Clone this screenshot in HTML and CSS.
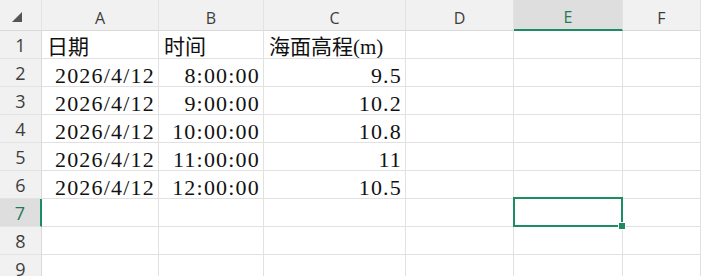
FILE: index.html
```html
<!DOCTYPE html>
<html lang="zh-CN">
<head>
  <meta charset="UTF-8" />
  <title>海面高程</title>
  <link rel="stylesheet" href="styles.css">
</head>
<body>

<div class="sheet">
  <!-- column headers -->
  <div class="corner">
    <svg width="10" height="10" viewBox="0 0 10 10"><polygon points="10,0 10,10 0,10" fill="#555"/></svg>
  </div>
  <div class="col-head">A</div>
  <div class="col-head">B</div>
  <div class="col-head">C</div>
  <div class="col-head">D</div>
  <div class="col-head active">E</div>
  <div class="col-head">F</div>

  <div class="row-head">1</div>
  <div class="cell text">日期</div>
  <div class="cell text">时间</div>
  <div class="cell text">海面高程(m)</div>
  <div class="cell"></div>
  <div class="cell"></div>
  <div class="cell"></div>

  <div class="row-head">2</div>
  <div class="cell num">2026/4/12</div>
  <div class="cell num">8:00:00</div>
  <div class="cell num">9.5</div>
  <div class="cell"></div>
  <div class="cell"></div>
  <div class="cell"></div>

  <div class="row-head">3</div>
  <div class="cell num">2026/4/12</div>
  <div class="cell num">9:00:00</div>
  <div class="cell num">10.2</div>
  <div class="cell"></div>
  <div class="cell"></div>
  <div class="cell"></div>

  <div class="row-head">4</div>
  <div class="cell num">2026/4/12</div>
  <div class="cell num">10:00:00</div>
  <div class="cell num">10.8</div>
  <div class="cell"></div>
  <div class="cell"></div>
  <div class="cell"></div>

  <div class="row-head">5</div>
  <div class="cell num">2026/4/12</div>
  <div class="cell num">11:00:00</div>
  <div class="cell num">11</div>
  <div class="cell"></div>
  <div class="cell"></div>
  <div class="cell"></div>

  <div class="row-head">6</div>
  <div class="cell num">2026/4/12</div>
  <div class="cell num">12:00:00</div>
  <div class="cell num">10.5</div>
  <div class="cell"></div>
  <div class="cell"></div>
  <div class="cell"></div>

  <div class="row-head active">7</div>
  <div class="cell"></div>
  <div class="cell"></div>
  <div class="cell"></div>
  <div class="cell"></div>
  <div class="cell selected"><span class="sel-box"><span class="sel-handle"></span></span></div>
  <div class="cell"></div>

  <div class="row-head">8</div>
  <div class="cell"></div>
  <div class="cell"></div>
  <div class="cell"></div>
  <div class="cell"></div>
  <div class="cell"></div>
  <div class="cell"></div>

  <div class="row-head">9</div>
  <div class="cell"></div>
  <div class="cell"></div>
  <div class="cell"></div>
  <div class="cell"></div>
  <div class="cell"></div>
  <div class="cell"></div>
</div>

</body>
</html>
```

FILE: styles.css
```css
html, body {
  margin: 0;
  background: #fff;
  overflow: hidden;
}
.sheet {
  display: grid;
  grid-template-columns: 42px 117px 105px 142px 108px 109px 1fr;
  grid-template-rows: 31px repeat(9, 28px);
  width: 701px;
}
.corner, .col-head, .row-head {
  background: #f1f1f1;
  color: #3d3d3d;
  font-family: 'Open Sans', 'Noto Sans', sans-serif;
  display: flex;
  justify-content: center;
  align-items: center;
  box-sizing: border-box;
}
.corner {
  border-right: 1px solid #e3e3e3;
  border-bottom: 1px solid #d9d9d9;
  align-items: flex-end;
  justify-content: flex-end;
  padding: 0 19px 8px 0;
}
.corner svg {
  display: block;
}
.col-head {
  font-size: 16px;
  border-right: 1px solid #e3e3e3;
  border-bottom: 1px solid #d9d9d9;
  padding-top: 5px;
}
.col-head.active {
  background: #dedede;
  color: #1e7b55;
  border-bottom: 2px solid #1e8c63;
}
.row-head {
  font-size: 18px;
  border-right: 1px solid #d9d9d9;
  border-bottom: 1px solid #e3e3e3;
}
.row-head.active {
  background: #dedede;
  color: #1e7b55;
  border-right: 2px solid #1e8c63;
}
.cell {
  box-sizing: border-box;
  border-right: 1px solid #e1e1e1;
  border-bottom: 1px solid #e1e1e1;
  font-family: 'Liberation Serif', 'Noto Sans CJK SC', serif;
  font-size: 22px;
  line-height: 20px;
  color: #111;
  display: flex;
  align-items: flex-end;
  white-space: nowrap;
  overflow: hidden;
}
.cell.text {
  font-size: 21px;
  padding-left: 5px;
  padding-bottom: 1px;
}
.cell.num {
  justify-content: flex-end;
  letter-spacing: 1.2px;
  padding-right: 3px;
}
.cell.selected {
  position: relative;
  overflow: visible;
}
.sel-box {
  position: absolute;
  top: -2px;
  left: -1px;
  right: -1px;
  bottom: -1px;
  border: 2px solid #1e8c63;
}
.sel-handle {
  position: absolute;
  right: -5px;
  bottom: -5px;
  width: 6px;
  height: 6px;
  background: #1e8c63;
  border: 1px solid #fff;
}
```
